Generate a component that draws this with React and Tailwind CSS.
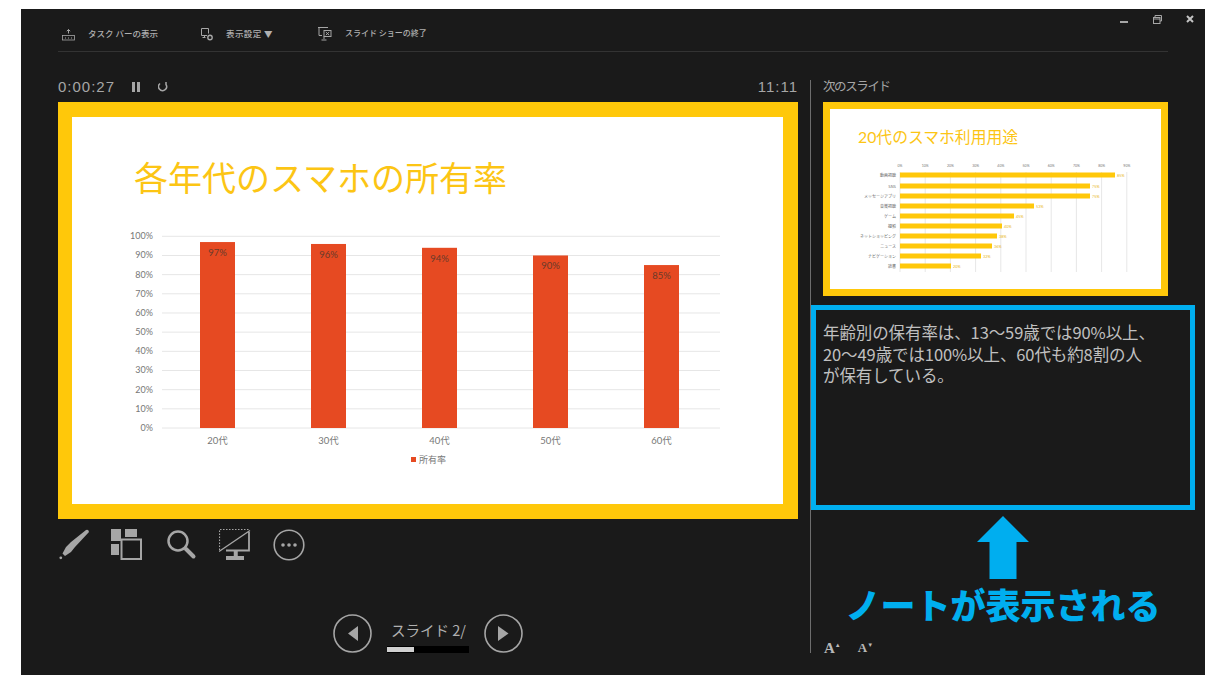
const jp = "font-['Noto_Sans_CJK_JP','Noto_Sans',sans-serif]";

const ownership = [
  { label: "20代", value: 97, x: 200 },
  { label: "30代", value: 96, x: 311 },
  { label: "40代", value: 94, x: 422 },
  { label: "50代", value: 90, x: 533 },
  { label: "60代", value: 85, x: 644 },
];

const usage = [
  { label: "動画視聴", end: 1115, y: 175, pct: "85%" },
  { label: "SNS", end: 1090, y: 186, pct: "75%" },
  { label: "メッセージアプリ", end: 1090, y: 196, pct: "75%" },
  { label: "音楽視聴", end: 1034, y: 206, pct: "53%" },
  { label: "ゲーム", end: 1014, y: 216, pct: "45%" },
  { label: "撮影", end: 1002, y: 226, pct: "40%" },
  { label: "ネットショッピング", end: 997, y: 236, pct: "38%" },
  { label: "ニュース", end: 992, y: 246, pct: "36%" },
  { label: "ナビゲーション", end: 981, y: 256, pct: "32%" },
  { label: "読書", end: 951, y: 266, pct: "20%" },
];

const OwnershipChart = () => {
  const yFor = (v) => 428 - v * 1.917;
  return (
    <svg width="610" height="250" viewBox="120 225 610 250" className="ml-[48px] mt-[23px] block">
      {Array.from({ length: 11 }, (_, i) => i * 10).map((v) => (
        <g key={v}>
          <line x1="162" x2="720" y1={yFor(v)} y2={yFor(v)} stroke="#e6e6e6" strokeWidth="1" />
          <text x="153" y={yFor(v) + 3} textAnchor="end" fontSize="9" fill="#777" fontFamily="Lato">
            {v}%
          </text>
        </g>
      ))}
      {ownership.map((b) => (
        <g key={b.label}>
          <rect x={b.x} y={yFor(b.value)} width="35" height={b.value * 1.917} fill="#e64a22" />
          <text x={b.x + 17.5} y={yFor(b.value) + 14} textAnchor="middle" fontSize="9.5" fill="#6a3a2a" fontFamily="Lato">
            {b.value}%
          </text>
          <text x={b.x + 17.5} y="444" textAnchor="middle" fontSize="9.5" fill="#777" fontFamily="Lato, 'Noto Sans CJK JP'">
            {b.label}
          </text>
        </g>
      ))}
      <rect x="411" y="457" width="5" height="5" fill="#e64a22" />
      <text x="419" y="463" fontSize="9" fill="#777" fontFamily="'Noto Sans CJK JP'">所有率</text>
    </svg>
  );
};

const UsageChart = () => (
  <svg width="300" height="120" viewBox="850 160 300 120" className="ml-[20px] mt-[10px] block">
    {Array.from({ length: 10 }, (_, i) => i).map((i) => {
      const x = 900 + i * 25.2;
      return (
        <g key={i}>
          <line x1={x} x2={x} y1="172" y2="272" stroke="#dcdcdc" strokeWidth="0.7" />
          <text x={x} y="167" textAnchor="middle" fontSize="3.5" fill="#777" fontFamily="Lato">{i * 10}%</text>
        </g>
      );
    })}
    {usage.map((u) => (
      <g key={u.label}>
        <rect x="900" y={u.y - 2.5} width={u.end - 900} height="5" fill="#ffc80a" />
        <text x="896" y={u.y + 1.5} textAnchor="end" fontSize="4" fill="#666" fontFamily="'Noto Sans CJK JP'">{u.label}</text>
        <text x={u.end + 2} y={u.y + 1.5} fontSize="3.8" fill="#e8b520" fontFamily="Lato">{u.pct}</text>
      </g>
    ))}
  </svg>
);

const TaskbarIcon = () => (
  <svg width="13" height="12" viewBox="0 0 13 12" fill="none" stroke="#a6a6a6">
    <path d="M6.5 0.5v4M4.8 2.2l1.7-1.7 1.7 1.7" strokeWidth="1" />
    <rect x="0.5" y="6.5" width="12" height="4.5" strokeWidth="0.8" />
    <path d="M3 9h1M6 9h1M9 9h1" strokeWidth="1.2" />
  </svg>
);

const DisplayIcon = () => (
  <svg width="14" height="13" viewBox="0 0 14 13" fill="none" stroke="#a6a6a6">
    <path d="M7 7.5H1.5v-7h7v5M4.5 7.5V9M2.5 9.5h3" strokeWidth="1" />
    <circle cx="10" cy="9.5" r="2.2" strokeWidth="1.4" />
  </svg>
);

const EndIcon = () => (
  <svg width="14" height="14" viewBox="0 0 14 14" fill="none" stroke="#a6a6a6">
    <path d="M0 0.5h10M1 1v7.5h3M6 9.5V12M3.5 13h5" strokeWidth="1" />
    <rect x="6" y="3.5" width="7" height="6" strokeWidth="1" />
    <path d="M7.8 5l3.4 3.2M11.2 5L7.8 8.2" strokeWidth="1" />
  </svg>
);

const PenIcon = () => (
  <svg width="31" height="31" viewBox="0 0 31 31" fill="#a6a6a6">
    <path d="M27 1Q29.5 0 30 3L16 18L12 23L6 27L3.5 24.5L7 18L12 13z" />
    <circle cx="1.8" cy="28.8" r="1.4" />
  </svg>
);

const GridIcon = () => (
  <svg width="31" height="31" viewBox="0 0 31 31" fill="#a6a6a6">
    <rect x="0" y="0" width="10" height="12" />
    <rect x="14" y="0" width="12" height="8" />
    <rect x="0" y="15" width="8" height="11" />
    <rect x="10.5" y="10.5" width="19.5" height="19.5" fill="none" stroke="#a6a6a6" strokeWidth="2" />
  </svg>
);

const SearchIcon = () => (
  <svg width="31" height="31" viewBox="0 0 31 31" fill="none" stroke="#a6a6a6" strokeLinecap="round">
    <circle cx="12" cy="12" r="9.5" strokeWidth="2.5" />
    <path d="M20 20l7.5 7.5" strokeWidth="4" />
  </svg>
);

const BlackScreenIcon = () => (
  <svg width="32" height="32" viewBox="0 0 32 32" fill="none" stroke="#a6a6a6">
    <path d="M0.5 21V0.5H30" strokeWidth="1.2" strokeDasharray="1.5 1.5" />
    <path d="M0 22.5L31 1.5" strokeWidth="1.4" />
    <path d="M30 3V21.5H7" strokeWidth="1.8" />
    <path d="M15 21.5h3.5V27H15z" fill="#a6a6a6" strokeWidth="0.5" />
    <rect x="7" y="27" width="18" height="4" fill="#a6a6a6" stroke="none" />
  </svg>
);

const MoreIcon = () => (
  <svg width="32" height="32" viewBox="0 0 32 32" fill="none">
    <circle cx="16" cy="16" r="14.8" stroke="#a6a6a6" strokeWidth="1.6" />
    <circle cx="10" cy="16" r="1.8" fill="#a6a6a6" />
    <circle cx="16" cy="16" r="1.8" fill="#a6a6a6" />
    <circle cx="22" cy="16" r="1.8" fill="#a6a6a6" />
  </svg>
);

const NavButton = ({ dir }) => (
  <svg width="39" height="39" viewBox="0 0 39 39" fill="none">
    <circle cx="19.5" cy="19.5" r="18.5" stroke="#a6a6a6" strokeWidth="1.6" />
    <path d={dir === "prev" ? "M25 12v15l-10-7.5z" : "M14 12v15l10.5-7.5z"} fill="#a6a6a6" />
  </svg>
);

const App = () => {
  return (
    <div className={`h-[687px] w-[1225px] overflow-hidden bg-white pl-[21px] pt-[9px] ${jp}`}>
      <div className="h-[666px] w-[1184px] bg-[#1a1a1a] text-[#a6a6a6]">
        {/* top bar */}
        <div className="flex h-[42px] justify-between">
          <div className="flex items-end pb-[10px] pl-[41px] text-[8.5px] font-medium leading-[14px] text-[#b0b0b0]">
            <TaskbarIcon />
            <span className="ml-[13px] w-[112px] pb-px">タスク バーの表示</span>
            <DisplayIcon />
            <span className="ml-[12px] w-[92px] pb-px tracking-[0.4px]">表示設定 ▼</span>
            <EndIcon />
            <span className="ml-[13px] pb-px text-[8px]">スライド ショーの終了</span>
          </div>
          <div className="flex items-start gap-[24px] pr-[11px] pt-[6px]">
            <svg className="mr-[1px]" width="8" height="10" viewBox="0 0 8 10"><rect x="0" y="6" width="8" height="2" fill="#a6a6a6" /></svg>
            <svg width="9" height="9" viewBox="0 0 9 9" fill="none" stroke="#a6a6a6"><rect x="0.5" y="2.5" width="6.5" height="6" /><path d="M2 2.5V0.5h6.5v5.5H7M0.5 4h6.5" /></svg>
            <svg width="8" height="8" viewBox="0 0 8 8" stroke="#c4c4c4" strokeWidth="2"><path d="M1 1l6 6M7 1L1 7" /></svg>
          </div>
        </div>
        <div className="ml-[37px] h-px w-[1110px] bg-[#333333]" />

        <div className="flex pl-[37px] pt-[28px]">
          {/* current slide column */}
          <div className="w-[740px]">
            <div className="flex h-[22px] items-start justify-between font-['Liberation_Sans',sans-serif] text-[15px] leading-[13px] tracking-[1px]">
              <div className="flex items-center">
                <span>0:00:27</span>
                <svg className="ml-[17px]" width="8" height="10" viewBox="0 0 8 10" fill="#a6a6a6"><rect x="0" y="0" width="3" height="10" /><rect x="5" y="0" width="3" height="10" /></svg>
                <svg className="ml-[18px]" width="10" height="10" viewBox="0 0 10 10" fill="none" stroke="#a6a6a6" strokeWidth="1.5"><path d="M2 1.5A4 4 0 1 0 8 2.5M8 0v3" /></svg>
              </div>
              <span>11:11</span>
            </div>
            <div className="h-[417px] border-y-[15px] border-l-[14px] border-r-[15px] border-[#ffc80a] bg-white">
              <div className="pl-[62px] pt-[35px] text-[34px] leading-[50px] text-[#fcc514]">各年代のスマホの所有率</div>
              <OwnershipChart />
            </div>
            <div className="flex items-start pl-[1px] pt-[10px]">
              <PenIcon />
              <div className="ml-[21px]"><GridIcon /></div>
              <div className="ml-[24px]"><SearchIcon /></div>
              <div className="ml-[22px]"><BlackScreenIcon /></div>
              <div className="ml-[22px]"><MoreIcon /></div>
            </div>
            <div className="flex items-start pl-[275px] pt-[53px]">
              <NavButton dir="prev" />
              <div className="ml-[15px] w-[82px]">
                <div className="pl-[4px] text-[14.5px] leading-[32px] text-[#b0b0b0]">スライド 2/</div>
                <div className="h-[7px] w-[82px] bg-black py-px">
                  <div className="h-[5px] w-[27px] bg-[#d0d0d0]" />
                </div>
              </div>
              <div className="ml-[15px]"><NavButton dir="next" /></div>
            </div>
          </div>

          {/* next slide + notes column */}
          <div className="ml-[12px] h-[573px] w-[385px] border-l border-[#6e6e6e]">
            <div className="h-[22px] pl-[12px] text-[12.5px] leading-[11px] tracking-[-1.4px]">次のスライド</div>
            <div className="ml-[12px] h-[194px] w-[345px] border-[7px] border-[#ffc80a] bg-white">
              <div className="pl-[28px] pt-[15px] text-[15.8px] leading-[26px] text-[#fcc514]">
                <span className="font-['Lato']">20</span>代のスマホ利用用途
              </div>
              <UsageChart />
            </div>
            <div className="mt-[9px] h-[205px] w-[384px] border-[5px] border-[#00aeef] px-[7px] pt-[12px] text-[16.5px] leading-[21.5px] tracking-[-0.1px] text-[#c0c0c0]">
              年齢別の保有率は、13～59歳では90%以上、
              <br />
              20～49歳では100%以上、60代も約8割の人
              <br />
              が保有している。
            </div>
            <div className="flex w-[384px] flex-col items-center pt-[6px]">
              <svg width="52" height="63" viewBox="0 0 52 63" fill="#00aeef">
                <path d="M26 0L52 26H39.5V63H12.5V26H0z" />
              </svg>
              <div className="whitespace-nowrap text-[35px] font-black leading-[50px] text-[#00aeef]">ノートが表示される</div>
            </div>
            <div className="flex pl-[13px] pt-[11px] font-['Liberation_Serif',serif] text-[#b8b8b8]">
              <span className="text-[15px] font-bold leading-[16px]">A<span className="align-super text-[6px] leading-none">▲</span></span>
              <span className="ml-[17px] text-[13px] font-bold leading-[16px]">A<span className="align-super text-[6px] leading-none">▼</span></span>
            </div>
          </div>
        </div>
      </div>
    </div>
  );
};

export default App;
